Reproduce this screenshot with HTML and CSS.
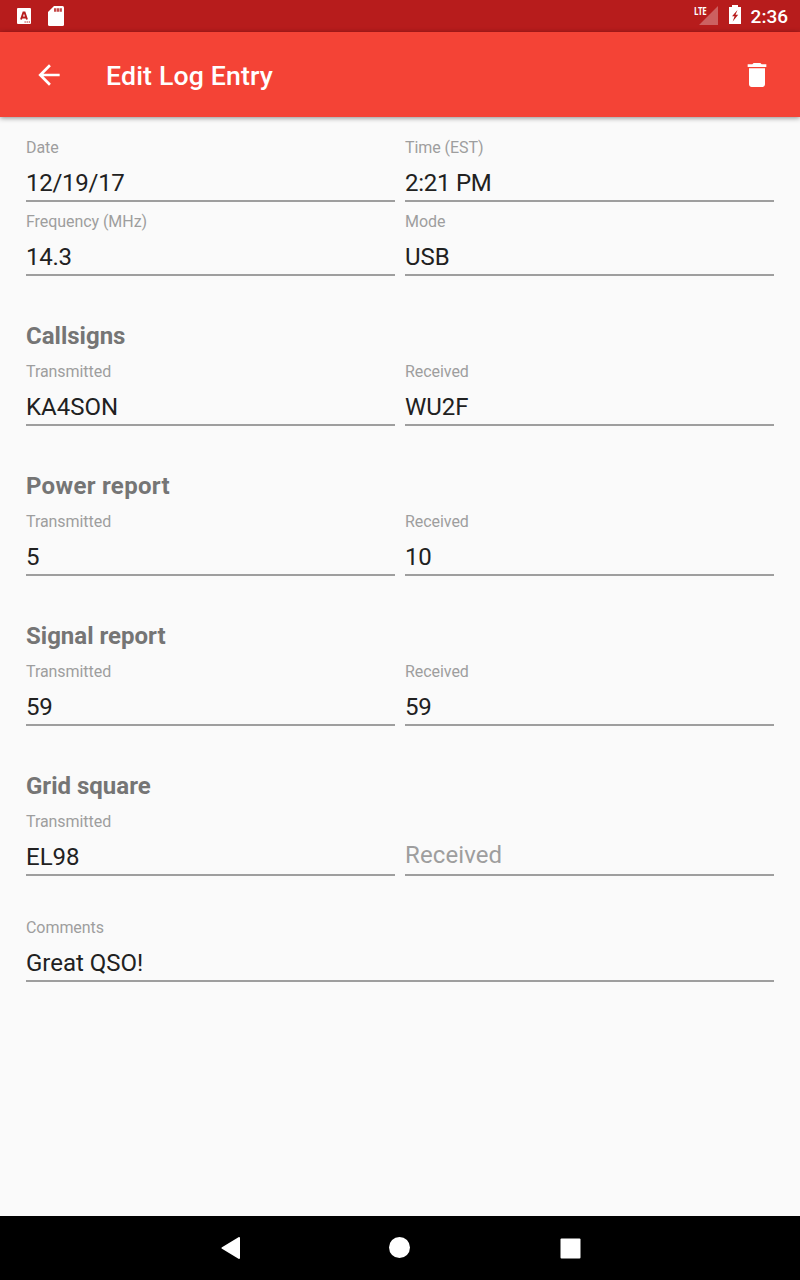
FILE: index.html
```html
<!DOCTYPE html>
<html lang="en">

<head>
    <meta charset="utf-8">
    <title>Edit Log Entry</title>
    <link rel="stylesheet" href="styles.css">
</head>

<body>
    <div class="status-bar">
        <svg class="notif" width="14" height="16" viewBox="0 0 14 16">
            <rect width="14" height="16" rx="1" fill="#fff"/>
            <path d="M4 11.500l2.400-7h1.200l2.400 7M5 9.500h4" fill="none" stroke="#b71c1c" stroke-width="1.9"/>
            <path d="M7.500 14h1.300M9.600 14h1.300M11.700 14h1.300" stroke="#b71c1c" stroke-width="1"/>
        </svg>
        <svg class="sd-card" width="16" height="20" viewBox="0 0 16 20">
            <path d="M6 0h8.500Q16 0 16 1.500V18.500Q16 20 14.500 20H1.500Q0 20 0 18.500V6z" fill="#fff"/>
            <path d="M6 2.200h2.300v3.600H6zM8.800 2.200h2.300v3.600H8.800zM11.600 2.200h2.300v3.600h-2.300z" fill="#b71c1c" opacity=".8"/>
        </svg>
        <div class="status-right">
            <span class="lte">LTE</span>
            <svg class="signal" width="19" height="19" viewBox="0 0 19 19">
                <path d="M19 0v19H0z" fill="#fff" opacity=".3"/>
            </svg>
            <svg class="battery" width="12" height="19" viewBox="0 0 12 19">
                <path d="M3 0h6v2h3v17H0V2h3z" fill="#fff"/>
                <path d="M8.500 5L3 11.200h2.600L3.700 16.500 9.200 9.800H6.500z" fill="#b71c1c"/>
            </svg>
            <span class="clock">2:36</span>
        </div>
    </div>

    <div class="toolbar">
        <svg class="back" width="32" height="32" viewBox="0 0 24 24">
            <path d="M20 11H7.830l5.590-5.590L12 4l-8 8 8 8 1.410-1.410L7.830 13H20v-2z" fill="#fff"/>
        </svg>
        <h1>Edit Log Entry</h1>
        <svg class="delete" width="32" height="32" viewBox="0 0 24 24">
            <path d="M6 19c0 1.100.9 2 2 2h8c1.100 0 2-.9 2-2V7H6v12zM19 4h-3.500l-1-1h-5l-1 1H5v2h14V4z" fill="#fff"/>
        </svg>
    </div>

    <div class="content">
        <div class="row">
            <div class="field">
                <div class="label">Date</div>
                <div class="value numeric">12/19/17</div>
            </div>
            <div class="field">
                <div class="label">Time (EST)</div>
                <div class="value numeric">2:21 PM</div>
            </div>
        </div>
        <div class="row">
            <div class="field">
                <div class="label">Frequency (MHz)</div>
                <div class="value numeric">14.3</div>
            </div>
            <div class="field">
                <div class="label">Mode</div>
                <div class="value">USB</div>
            </div>
        </div>

        <h2>Callsigns</h2>
        <div class="row">
            <div class="field">
                <div class="label">Transmitted</div>
                <div class="value">KA4SON</div>
            </div>
            <div class="field">
                <div class="label">Received</div>
                <div class="value">WU2F</div>
            </div>
        </div>

        <h2 class="report">Power report</h2>
        <div class="row">
            <div class="field">
                <div class="label">Transmitted</div>
                <div class="value numeric">5</div>
            </div>
            <div class="field">
                <div class="label">Received</div>
                <div class="value numeric">10</div>
            </div>
        </div>

        <h2>Signal report</h2>
        <div class="row">
            <div class="field">
                <div class="label">Transmitted</div>
                <div class="value numeric">59</div>
            </div>
            <div class="field">
                <div class="label">Received</div>
                <div class="value numeric">59</div>
            </div>
        </div>

        <h2>Grid square</h2>
        <div class="row">
            <div class="field">
                <div class="label">Transmitted</div>
                <div class="value">EL98</div>
            </div>
            <div class="field">
                <div class="value hint">Received</div>
            </div>
        </div>

        <div class="row comments">
            <div class="field">
                <div class="label">Comments</div>
                <div class="value">Great QSO!</div>
            </div>
        </div>
    </div>

    <div class="nav-bar">
        <svg width="20" height="22" viewBox="0 0 20 22">
            <path d="M19 1v20L2.500 11z" fill="#fff" stroke="#fff" stroke-width="2" stroke-linejoin="round"/>
        </svg>
        <svg width="22" height="22" viewBox="0 0 22 22">
            <circle cx="10.500" cy="10.500" r="10.500" fill="#fff"/>
        </svg>
        <svg width="21" height="21" viewBox="0 0 21 21">
            <rect x=".5" y=".5" width="20" height="20" rx="1" fill="#fff"/>
        </svg>
    </div>
</body>

</html>
```
FILE: styles.css
```css
* {
    box-sizing: border-box;
}

body {
    margin: 0;
    height: 1280px;
    display: flex;
    flex-direction: column;
    font-family: Roboto, sans-serif;
    background-color: #fafafa;
    color: #212121;
}

svg {
    display: block;
    flex: none;
}

.status-bar {
    display: flex;
    align-items: flex-start;
    height: 32px;
    padding: 0 12px 0 17px;
    background-color: #b71c1c;
    color: #fff;
}

.notif {
    margin-top: 8px;
}

.sd-card {
    margin: 6px 0 0 17px;
}

.status-right {
    display: flex;
    margin-left: auto;
}

.lte {
    width: 5px;
    margin-top: 5px;
    font-family: "Open Sans", sans-serif;
    font-size: 11px;
    font-weight: bold;
    line-height: 12px;
    letter-spacing: -0.5px;
    transform: scaleX(0.72);
    transform-origin: left;
}

.signal {
    margin-top: 6px;
}

.battery {
    margin: 5px 0 0 11px;
}

.clock {
    margin-left: 10px;
    font-size: 19px;
    font-weight: 500;
    line-height: 33px;
}

.toolbar {
    display: flex;
    align-items: center;
    height: 85px;
    padding: 0 27px 0 33px;
    background-color: #f44336;
    color: #fff;
    box-shadow: 0 1px 5px rgba(0, 0, 0, 0.45);
}

.toolbar h1 {
    flex: 1;
    margin: 2px 0 0 41px;
    font-size: 26.67px;
    font-weight: 500;
    line-height: 36px;
    letter-spacing: 0.15px;
}

/* Form */
.content {
    flex: 1;
    padding: 11px 26px 0;
}

.row {
    display: flex;
    gap: 10px;
}

.field {
    display: flex;
    flex: 1;
    flex-direction: column;
    justify-content: space-between;
    height: 74px;
    padding-top: 10px;
    border-bottom: 2px solid #9e9e9e;
}

.label {
    color: #9e9e9e;
    font-size: 16px;
    line-height: 19px;
    letter-spacing: -0.06px;
}

.value {
    font-size: 24px;
    line-height: 33px;
}

.numeric {
    letter-spacing: -0.27px;
}

.hint {
    margin-top: auto;
    padding-bottom: 2px;
    color: #9e9e9e;
    letter-spacing: 0.1px;
}

h2 {
    margin: 44px 0 0;
    color: #757575;
    font-size: 24px;
    font-weight: bold;
    line-height: 32px;
}

.report {
    letter-spacing: 0.3px;
}

.comments {
    margin-top: 32px;
}

.nav-bar {
    display: flex;
    align-items: center;
    justify-content: center;
    gap: 149px;
    height: 64px;
    background-color: #000;
}
```
